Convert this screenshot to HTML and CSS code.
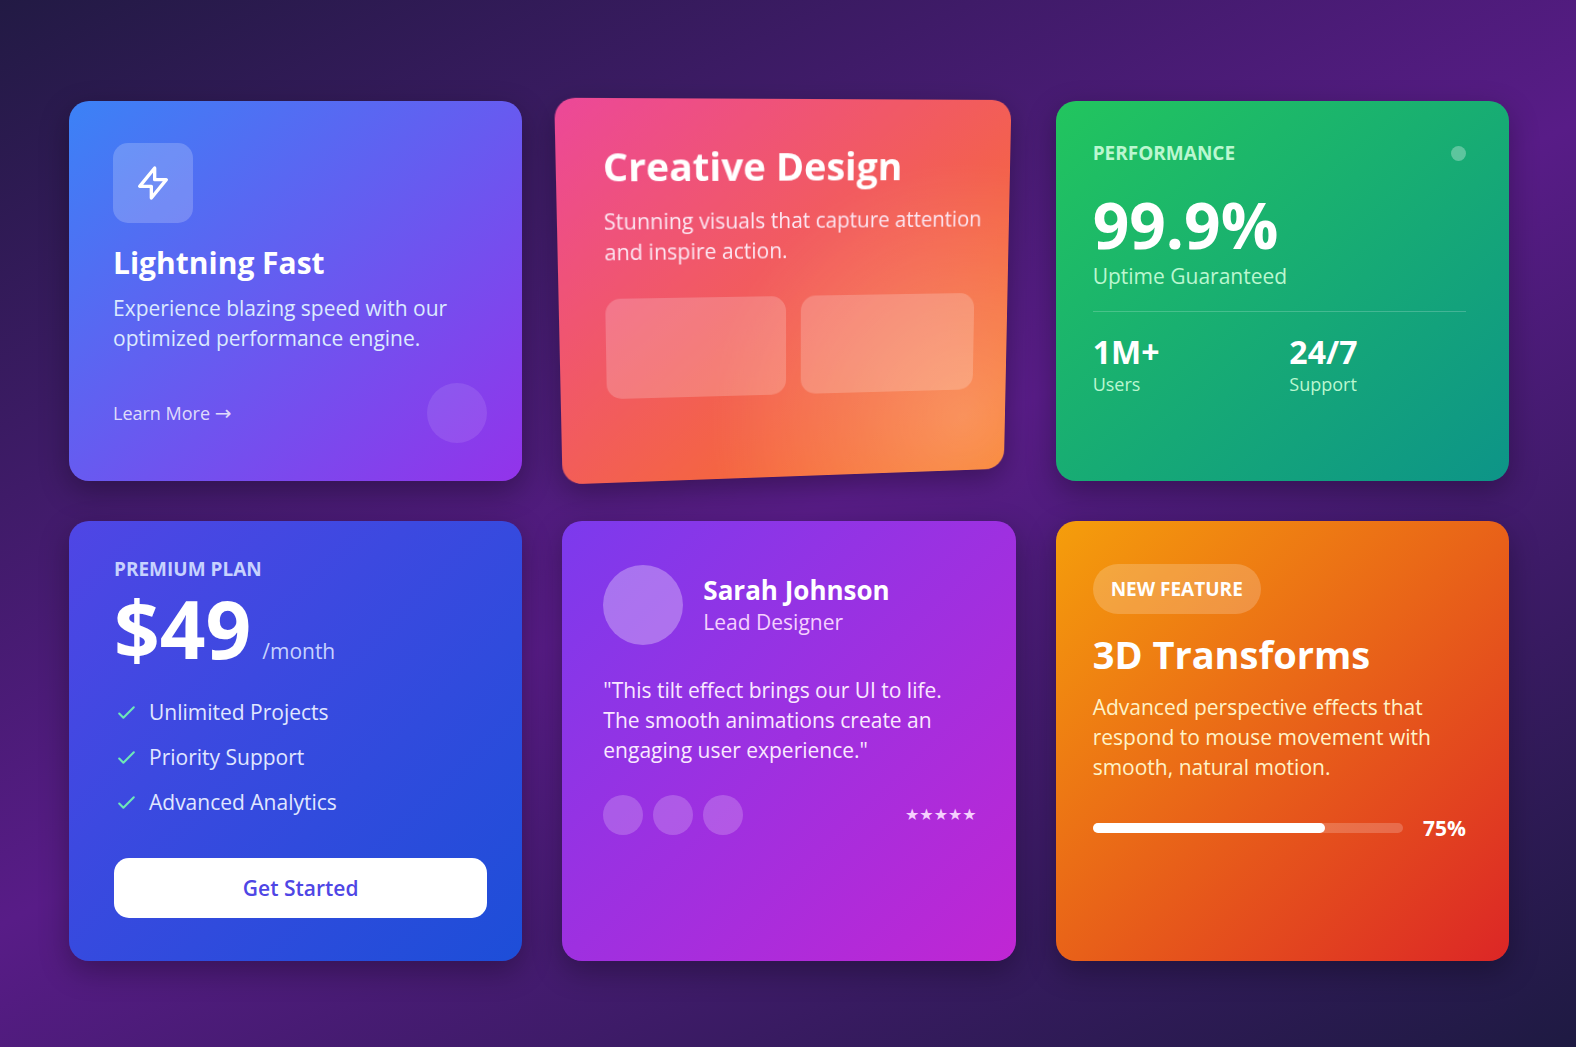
FILE: index.html
```html
<!DOCTYPE html>
<html lang="en">
<head>
    <meta charset="UTF-8">
    <meta name="viewport" content="width=device-width, initial-scale=1.0">
    <title>Tilt Cards</title>
    <link rel="stylesheet" href="styles.css">
</head>
<body>
    <main class="cards">
        <article class="card card-left card-speed">
            <div class="icon-box">
                <svg class="icon-bolt" viewBox="0 0 24 24" fill="none" stroke="currentColor" stroke-width="2" stroke-linecap="round" stroke-linejoin="round" aria-hidden="true">
                    <path d="M13 10V3L4 14h7v7l9-11h-7z"/>
                </svg>
            </div>
            <h2 class="title-sm">Lightning Fast</h2>
            <p class="text">Experience blazing speed with our optimized performance engine.</p>
            <div class="card-footer">
                <a class="learn-more" href="#">Learn More <span class="arrow">→</span></a>
                <span class="bubble"></span>
            </div>
        </article>

        <article class="card card-tilted">
            <h2 class="title-lg">Creative Design</h2>
            <p class="text">Stunning visuals that capture attention<br>and inspire action.</p>
            <div class="tiles">
                <div class="tile"></div>
                <div class="tile"></div>
            </div>
        </article>

        <article class="card card-right card-performance">
            <div class="card-header">
                <h2 class="label">PERFORMANCE</h2>
                <span class="status-dot"></span>
            </div>
            <div class="big-number">99.9%</div>
            <p class="text">Uptime Guaranteed</p>
            <div class="stats">
                <div>
                    <div class="stat-value">1M+</div>
                    <div class="stat-label">Users</div>
                </div>
                <div>
                    <div class="stat-value">24/7</div>
                    <div class="stat-label">Support</div>
                </div>
            </div>
        </article>

        <article class="card card-left card-pricing">
            <h2 class="label">PREMIUM PLAN</h2>
            <div class="price">
                <span class="price-amount">$49</span>
                <span class="price-period">/month</span>
            </div>
            <ul class="features">
                <li>
                    <svg class="icon-check" viewBox="0 0 24 24" fill="none" stroke="currentColor" stroke-width="2" stroke-linecap="round" stroke-linejoin="round" aria-hidden="true"><path d="M5 13l4 4L19 7"/></svg>
                    Unlimited Projects
                </li>
                <li>
                    <svg class="icon-check" viewBox="0 0 24 24" fill="none" stroke="currentColor" stroke-width="2" stroke-linecap="round" stroke-linejoin="round" aria-hidden="true"><path d="M5 13l4 4L19 7"/></svg>
                    Priority Support
                </li>
                <li>
                    <svg class="icon-check" viewBox="0 0 24 24" fill="none" stroke="currentColor" stroke-width="2" stroke-linecap="round" stroke-linejoin="round" aria-hidden="true"><path d="M5 13l4 4L19 7"/></svg>
                    Advanced Analytics
                </li>
            </ul>
            <button class="btn" type="button">Get Started</button>
        </article>

        <article class="card card-testimonial">
            <div class="person">
                <div class="avatar"></div>
                <div>
                    <h2 class="person-name">Sarah Johnson</h2>
                    <p class="person-role">Lead Designer</p>
                </div>
            </div>
            <p class="text">"This tilt effect brings our UI to life. The smooth animations create an engaging user experience."</p>
            <div class="rating-row">
                <div class="dots">
                    <span class="dot"></span>
                    <span class="dot"></span>
                    <span class="dot"></span>
                </div>
                <div class="stars">★★★★★</div>
            </div>
        </article>

        <article class="card card-right card-feature">
            <span class="badge">NEW FEATURE</span>
            <h2 class="title-lg">3D Transforms</h2>
            <p class="text">Advanced perspective effects that respond to mouse movement with smooth, natural motion.</p>
            <div class="progress">
                <div class="progress-track">
                    <div class="progress-fill" style="width: 75%"></div>
                </div>
                <span class="progress-value">75%</span>
            </div>
        </article>
    </main>
</body>
</html>
```
FILE: styles.css
```css
* {
    box-sizing: border-box;
    margin: 0;
    padding: 0;
}

body {
    min-height: 100vh;
    padding: 101px 67px 86px 69px;
    font-family: 'Segoe UI', 'Open Sans', sans-serif;
    font-size: 21px;
    line-height: 30px;
    color: #ffffff;
    background: linear-gradient(153deg, #221a44, #581c87, #1e1a42);
}

.cards {
    display: grid;
    grid-template-columns: repeat(3, minmax(0, 1fr));
    gap: 40px;
    max-width: 1440px;
    margin: 0 auto;
}

.card {
    padding: 40px 39px 40px 41px;
    border-radius: 20px;
    box-shadow: 0 10px 30px rgba(0, 0, 0, 0.3);
}

.card-left {
    padding-left: 44px;
    padding-right: 35px;
}

.card-right {
    padding-left: 37px;
    padding-right: 43px;
}

.title-sm {
    font-size: 30px;
    line-height: 40px;
    font-weight: 700;
}

.title-lg {
    font-size: 38px;
    line-height: 50px;
    font-weight: 700;
    margin-bottom: 13px;
}

.label {
    font-size: 19px;
    line-height: 24px;
    font-weight: 700;
}

/* Lightning Fast */
.card-speed {
    padding-top: 42px;
    padding-bottom: 38px;
    background: linear-gradient(to bottom right, #3b82f6, #9333ea);
}

.card-speed .text {
    color: #dbeafe;
}

.icon-box {
    display: flex;
    align-items: center;
    justify-content: center;
    width: 80px;
    height: 80px;
    margin-bottom: 20px;
    border-radius: 15px;
    background: rgba(255, 255, 255, 0.2);
}

.icon-bolt {
    width: 40px;
    height: 40px;
}

.card-speed .title-sm {
    margin-bottom: 10px;
}

.card-footer {
    display: flex;
    align-items: center;
    justify-content: space-between;
    margin-top: 30px;
}

.learn-more {
    font-size: 18px;
    color: rgba(255, 255, 255, 0.8);
    text-decoration: none;
}

.arrow {
    font-family: 'DejaVu Sans', sans-serif;
    font-size: 20px;
}

.bubble {
    width: 60px;
    height: 60px;
    border-radius: 50%;
    background: rgba(255, 255, 255, 0.1);
}

/* Creative Design */
.card-tilted {
    padding-left: 45px;
    padding-right: 35px;
    background:
        radial-gradient(circle at 90% 85%, rgba(255, 255, 255, 0.25), transparent 50%),
        linear-gradient(to bottom right, #ec4899, #f97316);
    transform: perspective(1250px) rotateX(-6.7deg) rotateY(7.8deg);
}

.card-tilted .title-lg {
    margin-bottom: 14px;
}

.card-tilted .text {
    color: #fce7f3;
    white-space: nowrap;
}

.tiles {
    display: grid;
    grid-template-columns: 1fr 1fr;
    gap: 15px;
    margin-top: 31px;
}

.tile {
    height: 100px;
    border-radius: 15px;
    background: rgba(255, 255, 255, 0.2);
}

/* Performance */
.card-performance {
    background: linear-gradient(to bottom right, #22c55e, #0d9488);
}

.card-performance .label,
.card-performance .text,
.stat-label {
    color: #bbf7d0;
}

.card-header {
    display: flex;
    align-items: center;
    justify-content: space-between;
    margin-bottom: 28px;
}

.status-dot {
    width: 15px;
    height: 15px;
    border-radius: 50%;
    background: rgba(255, 255, 255, 0.3);
}

.big-number {
    font-size: 64px;
    line-height: 64px;
    font-weight: 700;
    margin-bottom: 4px;
}

.stats {
    display: grid;
    grid-template-columns: 1fr 1fr;
    gap: 20px;
    margin-top: 20px;
    padding-top: 20px;
    border-top: 1px solid rgba(255, 255, 255, 0.2);
}

.stat-value {
    font-size: 32px;
    line-height: 40px;
    font-weight: 700;
}

.stat-label {
    font-size: 18px;
    line-height: 24px;
}

/* Premium Plan */
.card-pricing {
    padding-top: 36px;
    padding-left: 45px;
    padding-bottom: 43px;
    background: linear-gradient(to bottom right, #4f46e5, #1d4ed8);
}

.card-pricing .label,
.price-period {
    color: #c7d2fe;
}

.price {
    display: flex;
    align-items: baseline;
    gap: 11px;
    margin-top: 7px;
}

.price-amount {
    font-size: 80px;
    line-height: 80px;
    font-weight: 700;
}

.features {
    display: flex;
    flex-direction: column;
    gap: 15px;
    margin-top: 29px;
    list-style: none;
    color: #e0e7ff;
}

.features li {
    display: flex;
    align-items: center;
    gap: 10px;
}

.icon-check {
    width: 25px;
    height: 25px;
    color: #6ee7b7;
}

.btn {
    width: 100%;
    height: 60px;
    margin-top: 41px;
    border: none;
    border-radius: 15px;
    background: #ffffff;
    color: #4f46e5;
    font: inherit;
    font-weight: 600;
    cursor: pointer;
}

/* Testimonial */
.card-testimonial {
    padding-top: 44px;
    background: linear-gradient(to bottom right, #7c3aed, #c026d3);
}

.card-testimonial .text {
    color: #fae8ff;
}

.person {
    display: flex;
    align-items: center;
    gap: 20px;
    margin-bottom: 30px;
}

.avatar {
    width: 80px;
    height: 80px;
    border-radius: 50%;
    background: rgba(255, 255, 255, 0.3);
}

.person-name {
    font-size: 26px;
    line-height: 34px;
    font-weight: 700;
}

.person-role {
    color: #f5d0fe;
}

.rating-row {
    display: flex;
    align-items: center;
    justify-content: space-between;
    margin-top: 30px;
}

.dots {
    display: flex;
    gap: 10px;
}

.dot {
    width: 40px;
    height: 40px;
    border-radius: 50%;
    background: rgba(255, 255, 255, 0.2);
}

.stars {
    font-family: 'DejaVu Sans', sans-serif;
    font-size: 16px;
    color: #f5d0fe;
}

/* 3D Transforms */
.card-feature {
    padding-top: 43px;
    background: linear-gradient(to bottom right, #f59e0b, #dc2626);
}

.card-feature .text {
    color: #fef3c7;
}

.badge {
    display: inline-block;
    padding: 10px 18px;
    margin-bottom: 15px;
    border-radius: 25px;
    background: rgba(255, 255, 255, 0.2);
    font-size: 19px;
    font-weight: 700;
    vertical-align: top;
}

.progress {
    display: flex;
    align-items: center;
    gap: 20px;
    margin-top: 31px;
}

.progress-track {
    flex: 1;
    height: 10px;
    border-radius: 5px;
    background: rgba(255, 255, 255, 0.2);
}

.progress-fill {
    height: 100%;
    border-radius: 5px;
    background: #ffffff;
}

.progress-value {
    font-weight: 700;
}
```
